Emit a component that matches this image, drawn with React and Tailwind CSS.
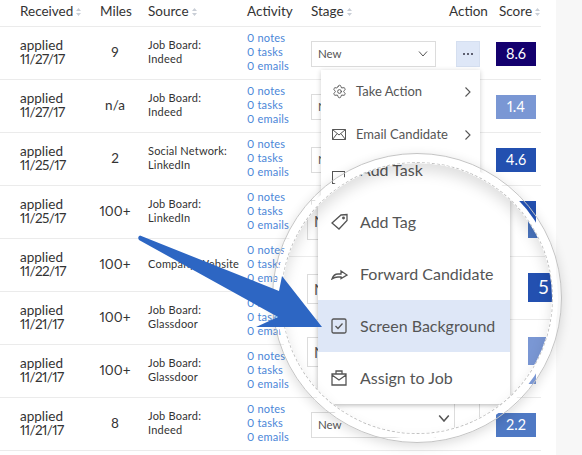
import { Settings } from "lucide-react";

const font = { fontFamily: '"Lato", "Liberation Sans", sans-serif' };

const rows = [
  ["11/27/17", "9", "Job Board:", "Indeed", "bg-[#14006e]", "8.6"],
  ["11/27/17", "n/a", "Job Board:", "Indeed", "bg-[#7a97d4]", "1.4"],
  ["11/25/17", "2", "Social Network:", "LinkedIn", "bg-[#2350b0]", "4.6"],
  ["11/25/17", "100+", "Job Board:", "LinkedIn", "bg-[#2350b0]", "4.6"],
  ["11/22/17", "100+", "Company Website", "", "bg-[#2350b0]", "5.0"],
  ["11/21/17", "100+", "Job Board:", "Glassdoor", "bg-[#7a97d4]", "1.4"],
  ["11/21/17", "100+", "Job Board:", "Glassdoor", "bg-[#7a97d4]", "1.4"],
  ["11/21/17", "8", "Job Board:", "Indeed", "bg-[#4f79c4]", "2.2"],
];

const Sort = () => (
  <svg width="5" height="8" viewBox="0 0 5 8" className="ml-[3px] mt-[1px]" fill="#c9ced6">
    <path d="M2.5 0 5 3H0zM2.5 8 0 5h5z" />
  </svg>
);

const Chevron = ({ w = 10, s = "#555", sw = 1 }) => (
  <svg width={w} height={w * 0.6} viewBox="0 0 10 6" fill="none" stroke={s} strokeWidth={sw}>
    <path d="M1 .5 5 5 9 .5" />
  </svg>
);

function Row({ r }) {
  return (
    <div className="flex h-[53px] items-center border-b border-[#ebebeb] text-[#333] proportional-nums">
      <div className="w-[80px] pb-[2px] pl-5 text-[13.5px] leading-[14px]">
        <div>applied</div>
        <div className="tracking-[-0.6px]">{r[0]}</div>
      </div>
      <div className="w-[68px] pb-[1px] pl-[2px] text-center text-[13.5px]">{r[1]}</div>
      <div className="w-[99px] whitespace-nowrap pb-[2px] text-[11px] leading-[14px] tracking-[0.2px]">
        <div>{r[2]}</div>
        {r[3] && <div>{r[3]}</div>}
      </div>
      <div className="w-[64px] pb-[2px] text-[11px] leading-[14px] tracking-[0.2px] text-[#4a86d8]">
        <div>0 notes</div>
        <div>0 tasks</div>
        <div>0 emails</div>
      </div>
      <div className="mt-[1px] flex h-[26px] w-[125px] shrink-0 items-center justify-between border border-[#dcdcdc] px-[6px] text-[11.5px] text-[#555]">
        New
        <span className="mr-[1px]"><Chevron /></span>
      </div>
    </div>
  );
}

const Item = ({ icon, children, arrow }) => (
  <div className="flex h-[43px] items-center pl-[11px] pr-[9px] text-[13px] text-[#555]">
    <span className="flex w-[24px] items-center">{icon}</span>
    <span className="flex-1">{children}</span>
    {arrow && (
      <svg width="6" height="10" viewBox="0 0 6 10" fill="none" stroke="#555" strokeWidth="1.1">
        <path d="M.5.5 5 5 .5 9.5" />
      </svg>
    )}
  </div>
);

const Mail = () => (
  <svg width="14" height="11" viewBox="0 0 14 11" fill="none" stroke="#555" strokeWidth="1">
    <path d="M.5.5h13v10H.5zM.5.5 7 6l6.5-5.500M.5 10.500 5 4.700M13.500 10.500 9 4.700" />
  </svg>
);

const LensItem = ({ icon, children, active }) => (
  <div className={`flex h-[52px] items-center pl-[13px] text-[16px] text-[#555] ${active ? "bg-[#dee7f7]" : ""}`}>
    <span className="flex w-[29px] items-center">{icon}</span>
    {children}
  </div>
);

export default function App() {
  return (
    <div className="relative h-[455px] w-[582px] overflow-hidden bg-white" style={font}>
      <div className="absolute inset-y-0 right-0 w-[26px] bg-[#f7f7f7]" />
      <div className="relative w-[541px]">
        <div className="flex h-[27px] items-center border-b border-[#ebebeb] pb-[3px] text-[13.500px] text-[#333]">
          <div className="flex w-[100px] items-center pl-5">Received<Sort /></div>
          <div className="w-[48px]">Miles</div>
          <div className="flex w-[99px] items-center">Source<Sort /></div>
          <div className="w-[64px]">Activity</div>
          <div className="flex w-[138px] items-center">Stage<Sort /></div>
          <div className="w-[50px]">Action</div>
          <div className="flex items-center">Score<Sort /></div>
        </div>
        {rows.map((r, i) => <Row key={i} r={r} />)}
        <div className="absolute left-[496px] top-[27px] flex flex-col proportional-nums">
          {rows.map((r, i) => (
            <div key={i} className="flex h-[53px] items-center">
              <div className={`flex h-[24px] w-[40px] items-center justify-center text-[14.5px] text-white ${r[4]}`}>{r[5]}</div>
            </div>
          ))}
        </div>
      </div>

      <div className="absolute left-[456px] top-[41px] flex h-[26px] w-[24px] items-center justify-center gap-[2px] border border-[#d5dff0] bg-[#dee7f7]">
        <i className="size-[2px] rounded-full bg-[#334]" />
        <i className="size-[2px] rounded-full bg-[#334]" />
        <i className="size-[2px] rounded-full bg-[#334]" />
      </div>

      <div className="absolute left-[321px] top-[70px] h-[130px] w-[159px] bg-white shadow-[0_1px_5px_rgba(0,0,0,0.2)]">
        <Item icon={<Settings size={15} color="#555" strokeWidth={1.5} />} arrow>Take Action</Item>
        <Item icon={<Mail />} arrow>Email Candidate</Item>
        <Item icon={<span className="size-[13px] border border-[#555]" />}>Add Task</Item>
      </div>

      {/* magnifier: thin outer line, clear band, white ring, dashed inner line */}
      <div className="absolute left-[272px] top-[153px] size-[290px] rounded-full border border-[#c4c4c4] p-[3px] shadow-[0_3px_12px_rgba(0,0,0,0.14)]">
        <div className="size-full rounded-full bg-white p-[5px]">
          <div className="relative size-full overflow-hidden rounded-full border border-dashed border-[#c0c0c0] bg-white">
            <div className="absolute left-[25px] top-[40px] h-[37px] w-[40px] border border-[#dcdcdc] pl-[6px] pt-[10px] text-[15px] leading-none text-[#555]">N</div>
            <div className="absolute left-[25px] top-[111px] h-[30px] w-[40px] border border-[#dcdcdc] pl-[6px] pt-[7px] text-[15px] leading-none text-[#555]">N</div>
            <div className="absolute left-[25px] top-[174px] h-[30px] w-[40px] border border-[#dcdcdc] pl-[6px] pt-[7px] text-[15px] leading-none text-[#555]">N</div>
            <div className="absolute left-[246px] top-[36px] h-[39px] w-[40px] bg-[#4a75c0]" />
            <div className="absolute left-[246px] top-[110px] flex h-[29px] w-[40px] items-center bg-[#2350b0] pl-[10px] text-[19px] text-white">5</div>
            <div className="absolute left-[246px] top-[174px] h-[28px] w-[40px] bg-[#7a97d4]" />
            <div className="absolute inset-x-0 top-[93px] h-px bg-[#ebebeb]" />
            <div className="absolute inset-x-0 top-[156px] h-px bg-[#ebebeb]" />
            <div className="absolute left-[36px] top-[240px] h-[50px] w-[137px] border-r border-[#dcdcdc]" />
            <div className="absolute left-[173px] top-[240px] h-[50px] w-[25px] border-r border-[#dcdcdc]" />
            <div className="absolute left-[156px] top-[252px]"><Chevron w={12} sw={1.3} /></div>
            <div className="absolute left-[36px] top-[-19px] w-[192px] bg-white shadow-[0_1px_5px_rgba(0,0,0,0.3)]">
              <LensItem icon={<span />}>Add Task</LensItem>
              <LensItem icon={<svg width="18" height="18" viewBox="0 0 18 18" fill="none" stroke="#555" strokeWidth="1.300"><path d="M1 10 10 2l6-.5v6L8 16z" /><circle cx="12.500" cy="5" r=".8" fill="#555" /></svg>}>Add Tag</LensItem>
              <LensItem icon={<svg width="17" height="11" viewBox="0 0 17 11" fill="none" stroke="#555" strokeWidth="1.300"><path d="M1 10c1-3 3-5 6-5h3V2l6 4-6 3.500V8H7c-2 0-4 .5-6 2z" /></svg>}>Forward Candidate</LensItem>
              <LensItem active icon={<svg width="16" height="16" viewBox="0 0 16 16" fill="none" stroke="#555" strokeWidth="1.300"><rect x="1" y="1" width="14" height="14" rx="1.500" /><path d="M4.500 8 7 10.500 11.500 5.500" /></svg>}>Screen Background</LensItem>
              <LensItem icon={<svg width="16" height="16" viewBox="0 0 16 16" fill="none" stroke="#555" strokeWidth="1.300"><path d="M1 4h14v11H1zM5 4V1h6v3M1 5l7 5 7-5" /></svg>}>Assign to Job</LensItem>
            </div>
            <div className="absolute inset-0 rounded-full shadow-[inset_0_8px_14px_rgba(0,0,0,0.13)]" />
          </div>
        </div>
      </div>

      <svg className="absolute left-0 top-0" width="582" height="455" fill="#2d66c3">
        <path d="M140 235.500 279 291 282 276 322 327 256 327 278 317 139 240Q137 237 140 235.500Z" />
      </svg>
    </div>
  );
}
